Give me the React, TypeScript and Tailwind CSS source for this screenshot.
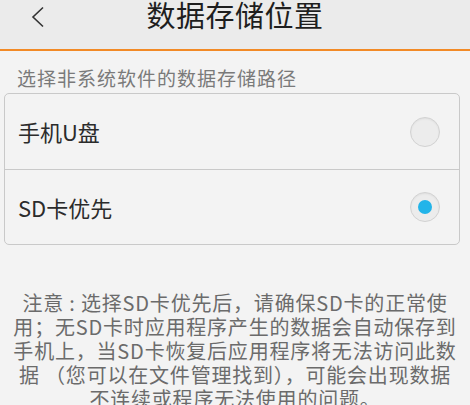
import { useState } from "react";

const FONT = { fontFamily: '"Noto Sans CJK SC", "Noto Sans", sans-serif' };

const OPTIONS = [
  { id: "phone", label: "手机U盘" },
  { id: "sd", label: "SD卡优先" },
];

const NOTE_LINES = [
  "注意 : 选择SD卡优先后，请确保SD卡的正常使",
  "用；无SD卡时应用程序产生的数据会自动保存到",
  "手机上，当SD卡恢复后应用程序将无法访问此数",
  "据 （您可以在文件管理找到），可能会出现数据",
  "不连续或程序无法使用的问题。",
];

function Radio({ checked }: { checked: boolean }) {
  return (
    <div className="w-[30px] h-[30px] rounded-full border border-[#d2d2d2] bg-[#ececec] shadow-[inset_0_1px_2px_rgba(0,0,0,0.06)] flex items-center justify-center">
      {checked && <div className="w-[14px] h-[14px] rounded-full bg-[#22b4e9]" />}
    </div>
  );
}

export default function App() {
  const [selected, setSelected] = useState("sd");

  return (
    <div className="w-[470px] h-[405px] overflow-hidden bg-[#f3f3f3]" style={FONT}>
      {/* Title bar */}
      <header className="h-[51px] bg-[#ebebeb] border-b-2 border-[#f28a26] relative flex justify-center">
        <button className="absolute left-[30px] top-[6px] text-[#333]">
          <svg width="15" height="22" viewBox="0 0 15 22" fill="none">
            <path d="M13 1.5L3 11l10 9.5" stroke="currentColor" strokeWidth="1.6" />
          </svg>
        </button>
        <h1 className="text-[29px] leading-[30px] -mt-[1px] text-[#1e1e1e] tracking-[0.5px]">数据存储位置</h1>
      </header>

      <p className="pl-[17px] pt-[15px] text-[19px] leading-[24px] text-[#7a7a7a] tracking-[1px]">
        选择非系统软件的数据存储路径
      </p>

      {/* Options */}
      <div className="mx-[4px] mt-[3px] w-[456px] rounded-[5px] border border-[#c9c9c9]">
        {OPTIONS.map((opt, i) => (
          <div
            key={opt.id}
            onClick={() => setSelected(opt.id)}
            className={`h-[75px] flex items-center justify-between pl-[13px] pr-[19px] ${
              i > 0 ? "border-t border-[#c9c9c9]" : ""
            }`}
          >
            <span className="text-[22px] text-[#2b2b2b]">{opt.label}</span>
            <Radio checked={selected === opt.id} />
          </div>
        ))}
      </div>

      {/* Note */}
      <div className="mt-[46px] text-center text-[20px] leading-[24px] text-[#6b6b6b] tracking-[0.8px]">
        {NOTE_LINES.map((line) => (
          <div key={line}>{line}</div>
        ))}
      </div>
    </div>
  );
}
